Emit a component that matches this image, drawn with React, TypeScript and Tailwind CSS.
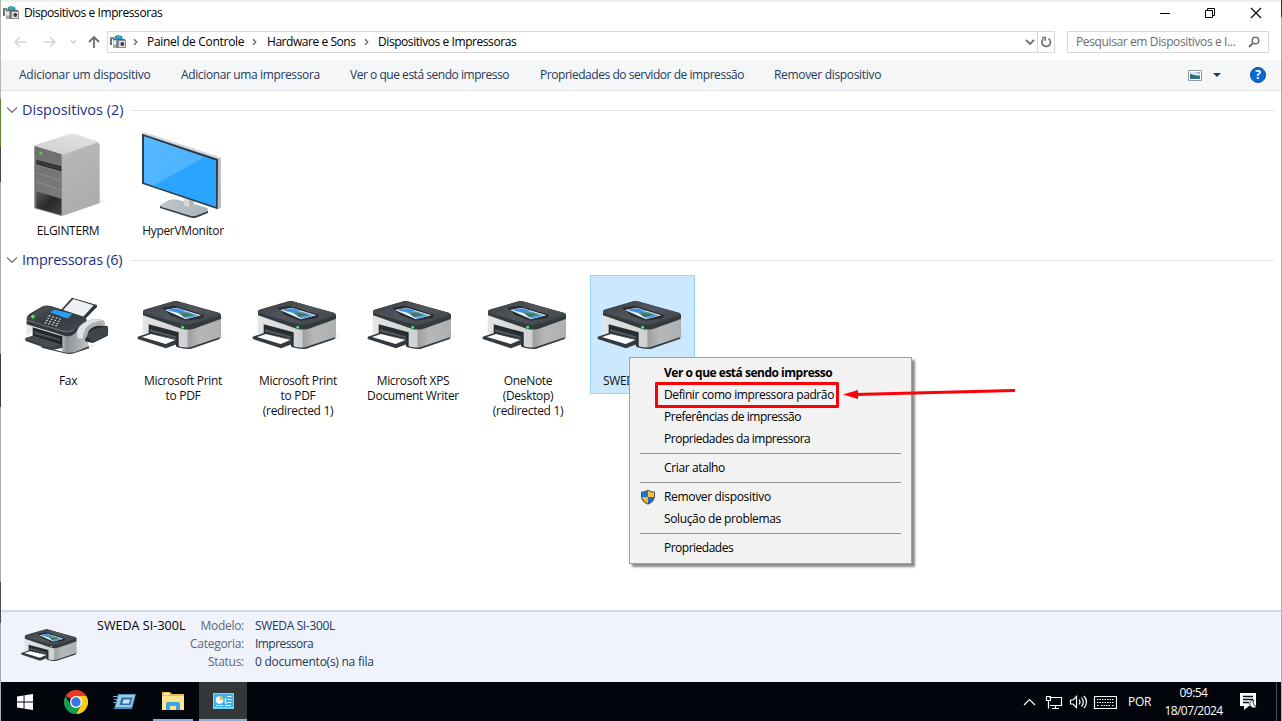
import React from "react";

function Printer({ className }: { className: string }) {
  return (
    <svg viewBox="390 15 315 294" className={className}>
      <defs>
        <linearGradient id="pTop" x1="0" y1="0" x2="1" y2="1">
          <stop offset="0" stopColor="#3a4044" />
          <stop offset="0.5" stopColor="#50565b" />
          <stop offset="1" stopColor="#3b4145" />
        </linearGradient>
        <linearGradient id="pFront" x1="0" x2="1">
          <stop offset="0" stopColor="#e4e5e6" />
          <stop offset="1" stopColor="#cfd0d2" />
        </linearGradient>
        <linearGradient id="pSide" x1="0" x2="1">
          <stop offset="0" stopColor="#9b9da0" />
          <stop offset="0.35" stopColor="#b5b7b9" />
          <stop offset="1" stopColor="#adafb1" />
        </linearGradient>
        <linearGradient id="pShadow" x1="0" x2="1">
          <stop offset="0" stopColor="#8c8f94" stopOpacity="0.4" />
          <stop offset="1" stopColor="#8c8f94" stopOpacity="0" />
        </linearGradient>
      </defs>
      <path d="M600 225 L660 190 L685 198 L650 212Z" fill="url(#pShadow)" />
      <path d="M428 136 L562 178 L562 234 L532 227 L532 197 L446 166 L446 194 L428 190Z" fill="url(#pFront)" />
      <path d="M562 178 L663 147 L663 199 Q661 205 640 211 L562 235Z" fill="url(#pSide)" />
      <path d="M528 226 Q555 236 572 231 L662 201 L659 207 L574 236 Q559 239 532 232Z" fill="#343b40" />
      <path d="M446 163 L536 187 L536 228 L528 230 L528 208 L446 190Z" fill="#262d32" />
      <path d="M450 177 L528 199 L528 205 L450 185Z" fill="#50575d" />
      <path d="M413 200 L449 188 L532 209 L530 223 L498 235 L413 207Z" fill="#343b40" />
      <path d="M426 201 L453 192 L526 210 L497 222Z" fill="#fff" />
      <path d="M429 123 Q430 120 437 118 L520 94 Q528 91 538 95 L657 128 Q664 131 663 136 L663 147 Q630 159 582 176 Q560 181 545 176 L429 136Z" fill="#343b3f" />
      <path d="M430 122 L522 94 Q529 92 538 95 L659 130 Q663 133 655 137 L582 161 Q563 167 546 162 L430 128Z" fill="url(#pTop)" />
      <path d="M487 113 L525 107 L612 135 L607 144 L557 152 L512 136Z" fill="#252b2f" />
      <path d="M495 120 L530 113 L604 136 L558 148Z" fill="#f8fbff" />
      <path d="M502 120 L530 115 L598 136 L560 145Z" fill="#7fc4f3" />
      <path d="M502 120 L530 115 L557 123 L530 128Z" fill="#3f90de" />
      <path d="M526 126 Q555 121 586 135 L560 145Z" fill="#4a929a" />
      <path d="M535 131 Q556 129 570 133 L588 137 L560 145Z" fill="#456f58" />
      <path d="M509 122 L535 129 L548 137 L542 138Z" fill="#dff1ff" />
      <path d="M552 140 L583 135 L596 137 L561 146Z" fill="#5aa1df" />
      <circle cx="548" cy="172" r="6" fill="#27613a" />
      <circle cx="548" cy="172" r="4" fill="#4af36b" />
    </svg>
  );
}

function Fax({ className }: { className: string }) {
  return (
    <svg viewBox="45 15 315 294" className={className}>
      <defs>
        <linearGradient id="fTop" x1="0" y1="0" x2="1" y2="1">
          <stop offset="0" stopColor="#565b60" />
          <stop offset="0.45" stopColor="#343a3f" />
          <stop offset="1" stopColor="#454b50" />
        </linearGradient>
        <linearGradient id="fBody" x1="0" x2="1">
          <stop offset="0" stopColor="#e6e7e8" />
          <stop offset="0.5" stopColor="#dedfe0" />
          <stop offset="0.65" stopColor="#909396" />
          <stop offset="1" stopColor="#c0c2c4" />
        </linearGradient>
      </defs>
      <path d="M262 226 L292 222 L270 235Z" fill="#ececee" />
      <path d="M79 154 L265 190 L265 232 L215 250 L185 245 L185 205 L99 181 L80 200Z" fill="url(#fBody)" />
      <path d="M125 228 L190 246 Q210 251 225 246 L267 229 L267 235 L222 250 Q209 254 190 249 L125 233Z" fill="#343b40" />
      <path d="M98 172 L187 199 L187 234 L98 202Z" fill="#1f262b" />
      <path d="M103 183 L180 207 L180 213 L103 192Z" fill="#485056" />
      <path d="M75 205 L99 197 L185 224 L187 234 L153 240 L77 213Z" fill="#3a4146" />
      <path d="M75 205 L99 197 L181 223 L151 233Z" fill="#454d53" />
      <path d="M182 121 L216 83 L291 105 L291 111 L253 149Z" fill="#30373c" />
      <path d="M187 122 L220 87 L281 106 L247 143Z" fill="#eff0f1" />
      <path d="M80 146 Q80 137 93 129 L125 110 Q137 104 153 108 L252 140 Q268 149 252 164 L228 187 Q215 202 195 198 L80 163Z" fill="#31383c" />
      <path d="M82 143 L126 111 Q137 107 153 110 L250 141 Q263 149 243 163 L223 181 Q210 192 192 188 L82 154Z" fill="url(#fTop)" />
      <path d="M82 151 L190 184 Q209 189 222 179" fill="none" stroke="#899095" strokeWidth="2" />
      <path d="M150 127 L164 119 L217 131 L205 145 L194 143Z" fill="#2a9df4" />
      <path d="M146 137 L184 148 M142 144 L180 155 M138 151 L176 162 M134 158 L172 168" stroke="#e4e6e8" strokeWidth="3.500" strokeDasharray="5 6" />
      <path d="M250 184 Q266 159 298 166 L322 168 Q326 175 323 197 L279 219 L256 214Z" fill="#252c31" />
      <path d="M255 195 Q276 176 322 169 L323 196 L279 216Z" fill="#3e464b" />
      <path d="M230 188 Q232 166 259 154 Q286 141 310 151 Q318 158 313 167 Q281 164 266 182 Q262 198 256 207 Q240 214 230 202Z" fill="#adb1b4" />
      <path d="M230 187 Q239 161 269 151 Q291 144 308 151 Q275 155 257 174 Q249 190 248 206 L234 205Z" fill="#e0e2e3" />
      <circle cx="99" cy="140" r="6" fill="#20d52f" />
      <circle cx="98" cy="139" r="3" fill="#88ff83" />
    </svg>
  );
}

function Server({ className }: { className: string }) {
  return (
    <svg viewBox="45 15 315 294" className={className}>
      <defs>
        <linearGradient id="sTop" x1="0" y1="1" x2="1" y2="0">
          <stop offset="0" stopColor="#cdcdcd" />
          <stop offset="1" stopColor="#e5e5e5" />
        </linearGradient>
        <linearGradient id="sSide" x1="0" y1="0" x2="0.3" y2="1">
          <stop offset="0" stopColor="#d2d2d2" />
          <stop offset="0.25" stopColor="#b5b5b5" />
          <stop offset="1" stopColor="#adadad" />
        </linearGradient>
        <linearGradient id="sFront" x1="0" x2="0" y2="1">
          <stop offset="0" stopColor="#6f6f6f" />
          <stop offset="1" stopColor="#7e7e7e" />
        </linearGradient>
        <linearGradient id="sBase" x1="0" x2="1" y2="1">
          <stop offset="0" stopColor="#5a5a5a" />
          <stop offset="0.5" stopColor="#292929" />
          <stop offset="1" stopColor="#454545" />
        </linearGradient>
      </defs>
      <path d="M292 234 L319 244 L250 268Z" fill="#f0f0f0" />
      <path d="M103 76 L210 42 Q217 39 226 42 L296 65 L299 73 L184 108Z" fill="url(#sTop)" />
      <path d="M183 104 L291 68 L299 72 L299 249 L194 286 L183 288Z" fill="url(#sSide)" />
      <path d="M103 77 L185 103 L185 288 L103 265Z" fill="#707070" />
      <path d="M109 82 L183 106 L183 284 L109 262Z" fill="url(#sFront)" />
      <path d="M109 119 L184 139 L184 155 L109 133Z" fill="#2f2f2f" />
      <path d="M113 126 L182 146" stroke="#555" strokeWidth="3" strokeDasharray="7 5" />
      <path d="M109 158 L183 182 M109 185 L183 211" stroke="#a4a4a4" strokeWidth="1.500" />
      <path d="M109 135 L183 156" stroke="#999" strokeWidth="1.500" />
      <path d="M109 214 L184 236 L184 285 L109 263Z" fill="url(#sBase)" />
      <circle cx="122" cy="100" r="4.500" fill="#24ea2d" />
    </svg>
  );
}

function Monitor({ className }: { className: string }) {
  return (
    <svg viewBox="390 15 315 294" className={className}>
      <defs>
        <linearGradient id="mScr" x1="0" y1="0" x2="1" y2="1">
          <stop offset="0" stopColor="#57b9ff" />
          <stop offset="1" stopColor="#45b0ff" />
        </linearGradient>
        <linearGradient id="mBase" x1="0" x2="1">
          <stop offset="0" stopColor="#bfc6ca" />
          <stop offset="1" stopColor="#aab1b8" />
        </linearGradient>
      </defs>
      <path d="M480 257 L570 286 Q579 289 589 286 L624 272 L624 279 L588 293 Q578 295 568 292 L480 264Z" fill="#3b4349" />
      <path d="M481 254 L507 240 Q519 236 533 239 L620 263 Q629 269 618 275 L590 286 Q579 289 568 286 L485 261Q479 258 481 254Z" fill="url(#mBase)" />
      <path d="M552 235 L581 239 L581 257 L567 262 L552 256Z" fill="#d8dadb" />
      <path d="M567 241 L581 242 L581 257 L567 262Z" fill="#b1b8bd" />
      <path d="M427 41 L436 38 L662 113 L663 264 L652 268Z" fill="#b4bac0" />
      <path d="M427 41 L436 38 L662 113 L654 117Z" fill="#d5d9dd" />
      <path d="M426 41 L654 117 L653 268 L426 191Z" fill="#303d48" />
      <path d="M432 49 L648 122 L648 260 L432 188Z" fill="url(#mScr)" />
      <path d="M460 197 L614 111 L648 122 L648 260Z" fill="#2ba4ff" />
    </svg>
  );
}

function DevicesGlyph() {
  return (
    <svg viewBox="0 0 16 14" className="h-3.5 w-4 shrink-0">
      <path d="M0 2h4v2H2v6H0z" fill="#6b7074" />
      <path d="M0 2h4v1.500H0z" fill="#83888b" />
      <path d="M4.500 1.500Q6 0 8 0t4.500 1.500V4h-8z" fill="#2c8fe0" />
      <path d="M6 .8Q8 0 10 1v1.800H7z" fill="#3fc35f" />
      <path d="M3 4h12v1.500H3z" fill="#5c6165" />
      <path d="M3 5h5v8H3z" fill="#a6abae" />
      <path d="M3.500 5.500h3v4h-3z" fill="#f0f1f2" />
      <path d="M6.500 5h1.200v8H6.500z" fill="#5d6266" />
      <path d="M8 5h8v8H8z" fill="#878d91" />
      <path d="M9 6h6v6H9z" fill="#dde0e1" />
      <circle cx="12.300" cy="9" r="1.900" fill="#3a4044" />
    </svg>
  );
}

function Crumb() {
  return (
    <svg viewBox="0 0 5 8" className="h-2 w-[5px] shrink-0">
      <path d="M1 1.300 3.800 4 1 6.700" fill="none" stroke="#666" strokeWidth="1.300" />
    </svg>
  );
}

function Section({ title, tracking }: { title: string; tracking: string }) {
  return (
    <div className="flex h-5 items-center pl-[5px] pr-[7px]">
      <svg viewBox="0 0 12 8" className="mr-1 h-2 w-3">
        <path d="M1 1.500 6 6.300 11 1.500" fill="none" stroke="#777" strokeWidth="1.200" />
      </svg>
      <h2 className={"w-[109px] whitespace-nowrap text-[14.5px] leading-5 text-[#1e3287] " + tracking}>{title}</h2>
      <div className="mt-[1px] h-px flex-1 bg-[#e2e2e2]" />
    </div>
  );
}

function Item({ icon: Icon, lines, selected = false }: { icon: typeof Printer; lines: string[]; selected?: boolean }) {
  return (
    <div
      className={
        "h-[119px] w-[105px] shrink-0 text-center " +
        (selected ? "bg-[#cce8ff] outline outline-1 -outline-offset-1 outline-[#99d1ff]" : "")
      }
    >
      <Icon className="h-[98px] w-[105px]" />
      {lines.map((l) => (
        <div key={l} className="whitespace-nowrap pl-px text-[12px] leading-[15px] tracking-[-0.32px] text-[#111]">
          {l}
        </div>
      ))}
    </div>
  );
}

function MenuItem({ children, tracking, shield = false }: { children: string; tracking: string; shield?: boolean }) {
  return (
    <div className={"flex h-[22px] items-center text-[12px] text-black " + tracking}>
      <span className="flex w-[34px] shrink-0 pl-[10px]">
        {shield && (
          <svg viewBox="0 0 16 16" className="h-4 w-4">
            <path d="M8 0.500C6 2 3.500 2.600 1 2.500V7c0 4 3 7 7 8.700C12 14 15 11 15 7V2.500C12.500 2.600 10 2 8 .5Z" fill="#4b5257" />
            <path d="M8 1.700C6 3 4 3.500 2 3.500V8h6z" fill="#1878d2" />
            <path d="M8 1.700C10 3 12 3.500 14 3.500V8H8z" fill="#fcc133" />
            <path d="M2.100 8H8v6.600C5 13.200 2.500 11 2.100 8Z" fill="#fcb82c" />
            <path d="M13.900 8H8v6.600c3-1.400 5.500-3.600 5.900-6.600Z" fill="#176fc9" />
          </svg>
        )}
      </span>
      <span className="whitespace-nowrap">{children}</span>
    </div>
  );
}

function Separator() {
  return <div className="mx-[10px] my-[3px] h-px bg-[#919191]" />;
}

function ContextMenu() {
  return (
    <div className="absolute left-[629px] top-[357px] z-10 h-[207px] w-[283px] border border-[#a0a0a0] bg-[#f2f2f2] pt-1 shadow-[3px_3px_2px_rgba(0,0,0,0.45)]">
      <MenuItem tracking="font-bold tracking-[-0.49px]">Ver o que está sendo impresso</MenuItem>
      <MenuItem tracking="tracking-[-0.4px]">Definir como impressora padrão</MenuItem>
      <MenuItem tracking="tracking-[-0.46px]">Preferências de impressão</MenuItem>
      <MenuItem tracking="tracking-[-0.48px]">Propriedades da impressora</MenuItem>
      <Separator />
      <MenuItem tracking="tracking-[-0.37px]">Criar atalho</MenuItem>
      <Separator />
      <MenuItem tracking="tracking-[-0.33px]" shield>Remover dispositivo</MenuItem>
      <MenuItem tracking="tracking-[-0.37px]">Solução de problemas</MenuItem>
      <Separator />
      <MenuItem tracking="tracking-[-0.5px]">Propriedades</MenuItem>
    </div>
  );
}

function TitleBar() {
  return (
    <header className="flex h-[25px] items-center pb-[3px] pl-[2px]">
      <DevicesGlyph />
      <span className="ml-[5px] flex-1 text-[12px] tracking-[-0.43px] text-black">Dispositivos e Impressoras</span>
      <svg viewBox="0 0 102 12" className="mr-[19px] h-3 w-[102px]" fill="none" stroke="#000">
        <path d="M0 6.500H10" />
        <path d="M45.500 3.500h7v7h-7zM47.500 3.500v-2h7v7h-2" />
        <path d="M91 1l10 10M101 1 91 11" strokeWidth="1.100" />
      </svg>
    </header>
  );
}

function NavBar() {
  return (
    <div className="flex h-[33px] items-center pb-[3px] pl-[13px] text-[12px] text-black">
      <svg viewBox="0 0 88 16" className="mr-[5px] h-4 w-[88px] shrink-0" fill="none">
        <path d="M12 8H1M6 3 1 8l5 5" stroke="#d5d5d5" strokeWidth="1.500" />
        <path d="M30 8h11M36 3l5 5-5 5" stroke="#d5d5d5" strokeWidth="1.500" />
        <path d="M57 6.500 59.500 9 62 6.500" stroke="#ccc" strokeWidth="1.300" />
        <path d="M80 14V3M75 8l5-5 5 5" stroke="#6c6c6c" strokeWidth="1.800" />
      </svg>
      <div className="flex h-[22px] w-[948px] items-center border border-[#d9d9d9] pl-[2px]">
        <DevicesGlyph />
        <span className="ml-[7px] flex w-[14px]"><Crumb /></span>
        <span className="w-[105px] whitespace-nowrap tracking-[-0.3px]">Painel de Controle</span>
        <span className="flex w-[15px]"><Crumb /></span>
        <span className="w-[97px] whitespace-nowrap tracking-[-0.45px]">Hardware e Sons</span>
        <span className="flex w-[14px]"><Crumb /></span>
        <span className="flex-1 whitespace-nowrap tracking-[-0.43px]">Dispositivos e Impressoras</span>
        <svg viewBox="0 0 10 6" className="mr-[2px] h-1.5 w-2.5">
          <path d="M1 1l4 4 4-4" fill="none" stroke="#707070" strokeWidth="1.800" />
        </svg>
        <span className="flex h-full w-[17px] items-center justify-center border-l border-[#d9d9d9]">
          <svg viewBox="0 0 12 12" className="h-3 w-3" fill="none" stroke="#707070" strokeWidth="1.700">
            <path d="M8.500 2.500A4.300 4.300 0 1 1 3 3.200M2 1.500h3.200v3.200" />
          </svg>
        </span>
      </div>
      <div className="ml-[12px] flex h-[22px] w-[202px] items-center border border-[#d9d9d9] pl-2 text-[#6d6d6d]">
        <span className="flex-1 whitespace-nowrap tracking-[-0.38px]">Pesquisar em Dispositivos e I...</span>
        <svg viewBox="0 0 12 12" className="mr-[8px] h-3 w-3" fill="none" stroke="#707070">
          <circle cx="7.500" cy="4.500" r="3.300" strokeWidth="1.500" />
          <path d="M5 7 1 11" strokeWidth="1.900" />
        </svg>
      </div>
    </div>
  );
}

function CommandBar() {
  return (
    <div className="flex h-[31px] items-center border-b border-[#e4e5e8] bg-[#f5f6f7] pl-[18px] text-[12px] text-[#1e395b]">
      <span className="w-[162px] whitespace-nowrap tracking-[-0.25px]">Adicionar um dispositivo</span>
      <span className="w-[169px] whitespace-nowrap tracking-[-0.37px]">Adicionar uma impressora</span>
      <span className="w-[190px] whitespace-nowrap tracking-[-0.47px]">Ver o que está sendo impresso</span>
      <span className="w-[234px] whitespace-nowrap tracking-[-0.45px]">Propriedades do servidor de impressão</span>
      <span className="flex-1 whitespace-nowrap tracking-[-0.32px]">Remover dispositivo</span>
      <svg viewBox="0 0 14 11" className="mr-[11px] h-[11px] w-3.5">
        <path d="M.5.5h13v10H.5z" fill="#fff" stroke="#929ba3" />
        <path d="M2 2h10v7H2z" fill="#83b9dc" />
        <path d="M2 2h5l5 2v1H2z" fill="#d5eaf6" />
        <path d="M2 4c3 0 4 2 10 2v1H2z" fill="#356b66" />
        <path d="M2 7h10v2H2z" fill="#236eaf" />
      </svg>
      <svg viewBox="0 0 8 4" className="mr-[29px] h-1 w-2"><path d="M0 0h8L4 4z" fill="#1e395b" /></svg>
      <span className="mr-[15px] flex h-4 w-4 items-center justify-center rounded-full border border-[#0d4c9e] bg-[#0968d2] text-[12px] font-bold leading-none text-white">?</span>
    </div>
  );
}

function DetailsPane() {
  const rows = [
    ["Modelo:", "SWEDA SI-300L", "tracking-[-0.35px]"],
    ["Categoria:", "Impressora", "tracking-[-0.55px]"],
    ["Status:", "0 documento(s) na fila", "tracking-[-0.25px]"],
  ];
  return (
    <div className="flex h-[72px] border-t-2 border-[#cddbea] bg-[#f0f3fb] text-[12px]">
      <Printer className="ml-[15px] h-[65px] w-[70px] shrink-0" />
      <div className="ml-[11px] mt-[5px] w-[89px] whitespace-nowrap leading-[18px] tracking-[0.05px] text-black text-[12.5px]">SWEDA SI-300L</div>
      <div className="mt-[5px]">
        {rows.map(([k, v, tracking]) => (
          <div key={k} className="flex h-[18px] items-center whitespace-nowrap">
            <span className="w-[58px] text-right tracking-[-0.28px] text-[#5a6779]">{k}</span>
            <span className={"ml-[11px] text-[#1e395b] " + tracking}>{v}</span>
          </div>
        ))}
      </div>
    </div>
  );
}

function Taskbar() {
  return (
    <footer className="flex h-[39px] bg-[#02050b] text-[12px] text-white">
      <div className="flex w-[48px] items-center justify-center">
        <svg viewBox="0 0 16 16" className="h-4 w-4" fill="#fff">
          <path d="M0 2.400 6.600 1.500V7.500H0zM7.500 1.300 16 0v7.500H7.500zM0 8.500h6.600v6L0 13.600zM7.500 8.500H16V16l-8.500-1.300z" />
        </svg>
      </div>
      <div className="flex w-[54px] items-center justify-center">
        <svg viewBox="0 0 24 24" className="h-6 w-6">
          <path d="M12 12 1.600 6A12 12 0 0 1 22.400 6z" fill="#e8392c" />
          <path d="M12 12V6h10.400A12 12 0 0 1 12 24l5.200-9z" fill="#fdcc16" />
          <path d="M12 12l5.200 3L12 24A12 12 0 0 1 1.600 6l5.200 9z" fill="#189c50" />
          <circle cx="12" cy="12" r="6" fill="#fff" />
          <circle cx="12" cy="12" r="4.700" fill="#3479e8" />
        </svg>
      </div>
      <div className="flex w-[44px] items-center justify-center">
        <svg viewBox="0 0 24 18" className="h-[18px] w-6">
          <path d="M5 1h18l-4 15H1z" fill="#4d8fc2" />
          <path d="M6 2h16l-3.500 12H2.500z" fill="#9bcdea" />
          <path d="M8.500 4.500h11l-2 7.500h-11z" fill="#3470a5" />
          <path d="M10.500 6.500h6.500l-1 4H9.500z" fill="#c8e3f2" />
          <path d="M0 3.500h5M1 6.500h4M0 9.500h3" stroke="#7f9fb5" />
        </svg>
      </div>
      <div className="flex w-[52px] justify-center">
        <div className="flex w-10 items-center justify-center border-b-2 border-[#76b9ed]">
          <svg viewBox="0 0 22 18" className="h-[18px] w-[22px]">
            <path d="M0 0h8l2 2h12v16H0z" fill="#edbd55" />
            <path d="M0 4h22v14H0z" fill="#ffe591" />
            <path d="M2 1h5v2H2z" fill="#fff2b5" />
            <path d="M4 18v-6q0-2 2-2h10q2 0 2 2v6h-4v-4H8v4z" fill="#39a5e4" />
          </svg>
        </div>
      </div>
      <div className="flex w-12 items-center justify-center border-b-2 border-[#76b9ed] bg-[#343638]">
        <svg viewBox="0 0 21 16" className="h-4 w-[21px]">
          <path d="M0 0h21v16H0z" fill="#7fd0f7" />
          <path d="M1 1h19v13H1z" fill="#3fb0ea" />
          <circle cx="6.500" cy="7" r="3.800" fill="#fff" />
          <path d="M6.500 7V3.200A3.800 3.800 0 0 1 10.300 7z" fill="#f7b53b" />
          <path d="M14.500 3.500h4M14.500 6.500h4M14.500 9.500h4M12.500 5v5h1.500" stroke="#fff" strokeWidth="1.200" fill="none" />
          <path d="M3 12.500h7M12 12.500h6" stroke="#d8f2ff" />
        </svg>
      </div>
      <div className="flex-1" />
      <div className="flex items-center">
        <svg viewBox="0 0 94 18" className="h-[18px] w-[94px]" fill="none" stroke="#fff" strokeWidth="1.200">
          <path d="M1 12 6.500 6.500 12 12" />
          <path d="M26 4.500h12.500v8H27M32.500 12.500v3M29 15.500h7M23.500 3.500h4v4h-4zM25.500 7.500v8" />
          <path d="M47.500 7H50l3.500-3.500v11L50 11h-2.500z" />
          <path d="M56 6.500q2 2.500 0 5M58.500 4.500q3.500 4.500 0 9M61 3q5 6 0 12" />
          <path d="M71.500 3.500h22v12h-22z" />
          <path d="M74 6.500h17M74 9.500h17M74 12.500h2M78 12.500h9M89 12.500h2" strokeDasharray="1.500 1" />
        </svg>
        <span className="ml-[11px] w-[30px] whitespace-nowrap tracking-[-0.300px]">POR</span>
        <div className="ml-[4px] w-[63px] text-center leading-[18px] tracking-[-0.550px]">
          <div>09:54</div>
          <div>18/07/2024</div>
        </div>
        <svg viewBox="0 0 18 17" className="ml-[15px] mr-[18px] h-[17px] w-[18px]">
          <path d="M0 0h16v13H9l-5 4v-4H0z" fill="#fff" />
          <path d="M3 3.500h10M3 6.500h10M3 9.500h6" stroke="#070b12" strokeWidth="1.300" />
          <path d="M14 7a4 4 0 1 0 3 6.500A4 4 0 0 1 14 7Z" fill="#fff" stroke="#070b12" strokeWidth=".8" />
        </svg>
        <div className="h-[39px] w-[5px] border-l border-[#4a4e52]" />
      </div>
    </footer>
  );
}

export default function App() {
  return (
    <div className="relative flex h-[721px] w-[1282px] overflow-hidden bg-white font-['Open_Sans','Noto_Sans',sans-serif]">
      <div className="flex w-px flex-col bg-[#a9a9a9]">
        <div className="h-[99px] bg-[#b5b5b5]" />
        <div className="h-[48px] bg-[#5c8436]" />
        <div className="h-[35px] bg-[#45464e]" />
        <div className="h-[172px]" />
        <div className="h-[53px] bg-[#3d3d43]" />
        <div className="h-[175px]" />
        <div className="h-[41px] bg-[#4c4c51]" />
      </div>
      <main className="flex w-[1280px] flex-col">
        <div className="h-[2px] bg-[#efefef]" />
        <TitleBar />
        <NavBar />
        <CommandBar />
        <div className="h-[519px] pt-[9px]">
          <Section title="Dispositivos (2)" tracking="tracking-[0px]" />
          <div className="flex h-[130px] gap-[10px] pl-[14px] pt-[5px]">
            <Item icon={Server} lines={["ELGINTERM"]} />
            <Item icon={Monitor} lines={["HyperVMonitor"]} />
          </div>
          <Section title="Impressoras (6)" tracking="tracking-[-0.28px]" />
          <div className="flex gap-[10px] pl-[14px] pt-[5px]">
            <Item icon={Fax} lines={["Fax"]} />
            <Item icon={Printer} lines={["Microsoft Print", "to PDF"]} />
            <Item icon={Printer} lines={["Microsoft Print", "to PDF", "(redirected 1)"]} />
            <Item icon={Printer} lines={["Microsoft XPS", "Document Writer"]} />
            <Item icon={Printer} lines={["OneNote", "(Desktop)", "(redirected 1)"]} />
            <Item icon={Printer} lines={["SWEDA SI-300L"]} selected />
          </div>
        </div>
        <DetailsPane />
        <Taskbar />
      </main>
      <div className="w-px bg-[#b0b0b0]"><div className="h-[17px] bg-[#333]" /></div>
      <ContextMenu />
      <div className="absolute left-[655px] top-[382px] z-20 h-[26px] w-[184px] rounded-[1px] border-3 border-[#fb0007]" />
      <svg viewBox="0 0 173 14" className="absolute left-[843px] top-[387px] z-20 h-3.5 w-[173px]">
        <path d="M12 7.500 171 3.500" stroke="#fb0007" strokeWidth="2.800" strokeLinecap="round" />
        <path d="M0 7.500 15 3v9z" fill="#fb0007" />
      </svg>
    </div>
  );
}
